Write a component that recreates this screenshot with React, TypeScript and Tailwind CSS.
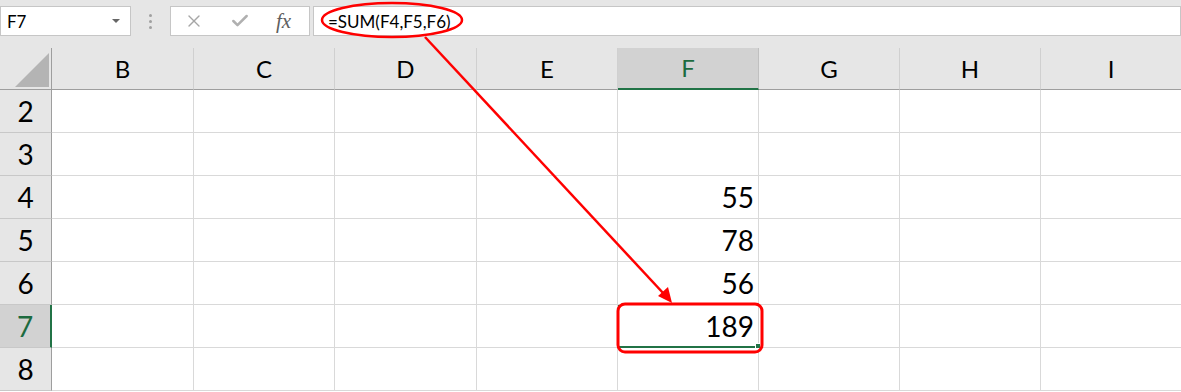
import { X, Check } from 'lucide-react';

const columns = ['B', 'C', 'D', 'E', 'F', 'G', 'H', 'I'];
const rows = [2, 3, 4, 5, 6, 7, 8];
const values: Record<number, string> = { 4: '55', 5: '78', 6: '56', 7: '189' };

export default function App() {
  return (
    <div
      className="relative w-[1181px] h-[392px] overflow-hidden bg-white text-black"
      style={{ fontFamily: 'Lato, "Open Sans", sans-serif' }}
    >
      {/* Formula bar */}
      <div className="h-12 bg-[#e6e6e6] flex items-start pt-[6px]">
        <div className="w-[131px] h-[30px] bg-white border border-[#c6c6c6] flex items-center justify-between pl-[6px] pr-[10px]">
          <span className="text-[17px] leading-none">F7</span>
          <span className="w-0 h-0 border-l-[4px] border-r-[4px] border-t-[4px] border-l-transparent border-r-transparent border-t-[#666]" />
        </div>
        <div className="w-[39px] h-[30px] flex flex-col items-center justify-center gap-[3px]">
          <span className="w-[3px] h-[3px] rounded-full bg-[#a0a0a0]" />
          <span className="w-[3px] h-[3px] rounded-full bg-[#a0a0a0]" />
          <span className="w-[3px] h-[3px] rounded-full bg-[#a0a0a0]" />
        </div>
        <div className="w-[140px] h-[30px] bg-white border border-[#c6c6c6] flex items-center pl-[13px]">
          <X className="w-[20px] h-[20px] text-[#a6a6a6]" strokeWidth={1.6} />
          <Check className="w-[20px] h-[20px] text-[#b0b0b0] ml-[26px]" strokeWidth={3} />
          <span
            className="ml-[26px] text-[21px] italic text-[#5f5f5f] leading-none"
            style={{ fontFamily: '"Liberation Serif", serif' }}
          >
            fx
          </span>
        </div>
        <div className="ml-[3px] flex-1 h-[30px] bg-white border border-[#c6c6c6] flex items-center pl-[14px]">
          <span className="text-[17px] leading-none">=SUM(F4,F5,F6)</span>
        </div>
      </div>

      {/* Grid */}
      <div className="grid grid-cols-[52px_142px_141px_142px_141px_141px_141px_141px_141px]">
        <div className="relative h-[42px] bg-[#e6e6e6] border-r border-b border-[#9e9e9e]">
          <svg className="absolute left-0 top-0" width="52" height="42">
            <polygon points="15,39 49,39 49,5" fill="#b4b4b4" />
          </svg>
        </div>
        {columns.map((c) => (
          <div
            key={c}
            className={
              c === 'F'
                ? 'h-[42px] bg-[#d2d2d2] border-r border-[#c0c0c0] border-b-2 border-b-[#217346] flex items-center justify-center text-[24px] text-[#1d6b3f]'
                : 'h-[42px] bg-[#e6e6e6] border-r border-[#d0d0d0] border-b border-b-[#9e9e9e] flex items-center justify-center text-[24px]'
            }
          >
            {c}
          </div>
        ))}

        {rows.map((r) => (
          <RowCells key={r} r={r} />
        ))}
      </div>

      {/* Annotations */}
      <svg className="absolute left-0 top-0 pointer-events-none" width="1181" height="392">
        <ellipse cx="392" cy="20" rx="70" ry="17" fill="none" stroke="#ff0000" strokeWidth="2.5" />
        <line x1="425" y1="37" x2="664" y2="294" stroke="#ff0000" strokeWidth="2.5" />
        <polygon points="672,303 658,296 668,287" fill="#ff0000" />
        <rect x="618" y="304" width="144" height="48" rx="7" fill="none" stroke="#ff0000" strokeWidth="3" />
      </svg>
    </div>
  );
}

function RowCells({ r }: { r: number }) {
  const selected = r === 7;
  return (
    <>
      <div
        className={
          selected
            ? 'h-[43px] bg-[#d2d2d2] border-b border-[#c8c8c8] border-r-2 border-r-[#217346] flex items-center justify-center text-[28px] text-[#1d6b3f]'
            : 'h-[43px] bg-[#e6e6e6] border-b border-[#c8c8c8] border-r border-r-[#9e9e9e] flex items-center justify-center text-[28px]'
        }
      >
        {r}
      </div>
      {columns.map((c) => {
        const isF = c === 'F';
        const active = isF && selected;
        return (
          <div
            key={c}
            className={
              active
                ? 'relative h-[43px] border-l border-[#217346] border-b-2 border-b-[#217346] border-r border-r-[#d4d4d4] flex items-center justify-end pr-[4px] text-[28px]'
                : 'h-[43px] border-r border-b border-[#d9d9d9] flex items-center justify-end pr-[4px] text-[28px]'
            }
          >
            {isF ? values[r] : ''}
            {active && <span className="absolute right-[-3px] bottom-[-3px] w-[6px] h-[6px] bg-[#217346] border border-white" />}
          </div>
        );
      })}
    </>
  );
}
